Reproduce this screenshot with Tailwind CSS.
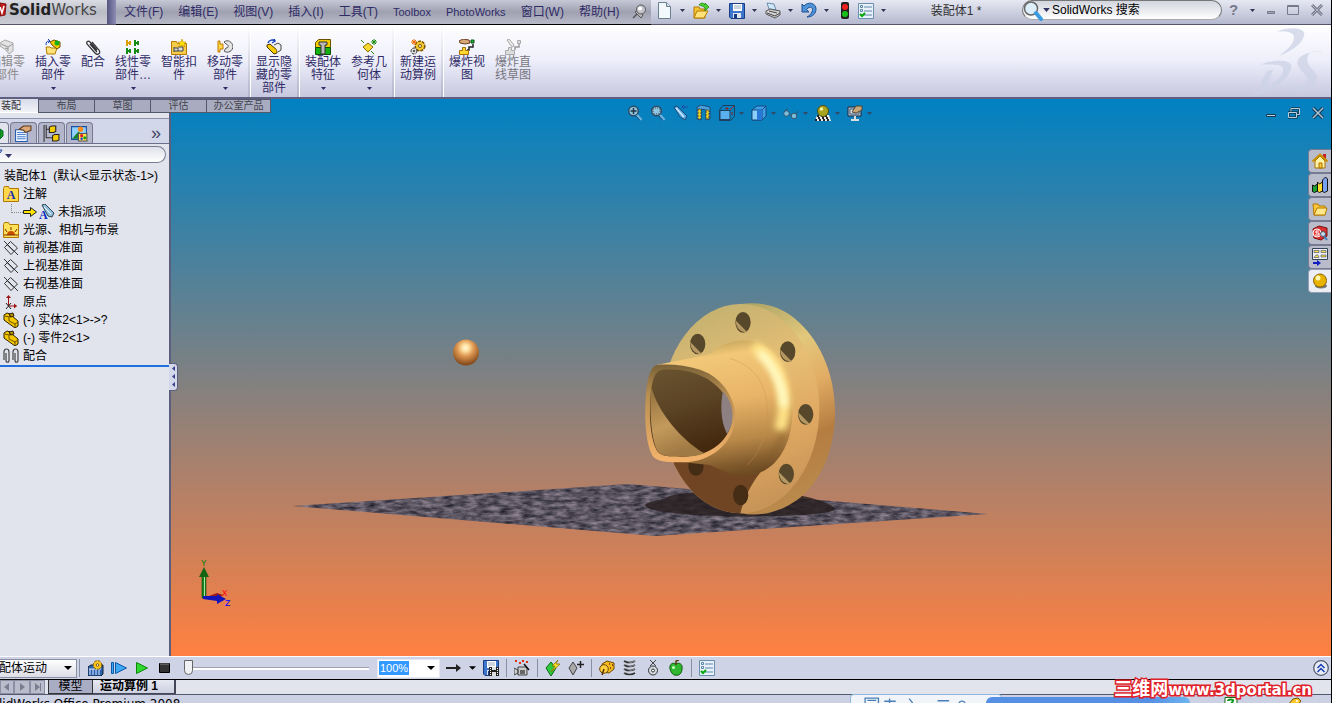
<!DOCTYPE html>
<html lang="zh-CN">
<head>
  <meta charset="UTF-8">
  <meta name="viewport" content="width=device-width, initial-scale=1.0">
  <title>SolidWorks - 装配体1</title>
  <script src="https://cdn.jsdelivr.net/npm/@tailwindcss/browser@4"></script>
</head>
<body class="h-screen flex flex-col overflow-hidden border-r border-black bg-[#cfd3e6] font-['Liberation_Sans','Noto_Sans_CJK_SC',sans-serif] text-[12px] leading-[18px] text-black">

  <!-- Shared symbols -->
  <svg class="hidden">
    <symbol id="down" viewBox="0 0 5 3"><path d="M0 0h5L2.500 3z" fill="currentColor"/></symbol>
    <symbol id="plane" viewBox="0 0 16 16"><path d="M1.500 7.500l6-6 7 6.500-6.500 6.500zM1 1l14 14M4 4.500l7 7" fill="none" stroke="#333"/></symbol>
    <symbol id="part" viewBox="0 0 16 16"><path d="M1 3l3-2 3 1v3l2-1 6 5v5l-3 2L1 8z" fill="#f5c800" stroke="#2b2000"/><path d="M2 4l4 1v4l6 3v3M6 5l2-1M12 12l3-2" fill="none" stroke="#6b5000"/><path d="M6 2l4-1 1 3-3 1z" fill="#b89000" stroke="#2b2000"/></symbol>
    <symbol id="floppy" viewBox="0 0 16 16"><path d="M.5.500h15v15H2l-1.500-1.500z" fill="#3d77cc" stroke="#173c82"/><path d="M4 1h9v7H4z" fill="#fff"/><path d="M5 3h7M5 5h7" stroke="#9ab"/><path d="M4 10h8v5H4z" fill="#dfe6f2"/><path d="M5 11h3v4H5z" fill="#173c82"/></symbol>
    <symbol id="list" viewBox="0 0 16 16"><path d="M.5.5h15v15H.500z" fill="#e8f0fa" stroke="#6b8fae"/><path d="M6 4h8M6 8h8M6 12h8" stroke="#5d87a8"/><path d="M2.500 2.500h2v2h-2zM2.500 6.500h2v2h-2z" fill="none" stroke="#5d87a8"/><path d="M2 11l2 2 3-3" fill="none" stroke="#0a0" stroke-width="2"/></symbol>
    <symbol id="mag" viewBox="0 0 16 16"><circle cx="6.500" cy="6" r="4.800" fill="#8fc4de" stroke="#2d4d66" stroke-width="1.500"/><path d="M10 10l4.500 5" stroke="#6fb4e0" stroke-width="2.500"/><path d="M9 11l4 4.500" stroke="#1c4a77"/></symbol>
  </svg>

  <!-- Title bar -->
  <header class="flex h-[25px] shrink-0 items-stretch border-b border-[#55566a] bg-gradient-to-b from-[#e6e8f2] to-[#b5b9cf]">
    <div class="flex w-[107px] shrink-0 items-center overflow-hidden bg-gradient-to-b from-[#dcdde4] via-[#b9bbc5] to-[#cccdd6] pb-1 text-[15px]">
      <svg class="mr-px h-4 w-[8px] shrink-0" viewBox="0 0 8 16"><path d="M0 1l6 1-1 11-5 1z" fill="#c41d1d" stroke="#7d1010"/><path d="M0 5l2 6 2-7" fill="none" stroke="#fff" stroke-width="1.500"/></svg>
      <h1 class="whitespace-nowrap font-['DejaVu_Sans']"><b class="text-[#222]">Solid</b><span class="text-[#444]">Works</span></h1>
    </div>
    <div class="w-[9px] shrink-0 bg-gradient-to-r from-[#55557f] to-[#8d8db5]"></div>
    <nav class="-mb-px flex w-[535px] shrink-0 items-center gap-[15px] whitespace-nowrap border-b border-black bg-gradient-to-b from-[#c6c8d6] via-[#9fa1b1] to-[#b9bac8] pb-px pl-2 text-[#2f2b66]">
      <a href="#">文件(F)</a>
      <a href="#">编辑(E)</a>
      <a href="#">视图(V)</a>
      <a href="#">插入(I)</a>
      <a href="#">工具(T)</a>
      <a href="#" class="text-[11px]">Toolbox</a>
      <a href="#" class="text-[11px]">PhotoWorks</a>
      <a href="#">窗口(W)</a>
      <a href="#">帮助(H)</a>
      <svg class="-ml-[3px] h-4 w-4" viewBox="0 0 16 16"><path d="M1 14l5-5" stroke="#555" stroke-width="1.500"/><path d="M3 8l6 6 2-3-5-5z" fill="#bbb" stroke="#555"/><circle cx="9" cy="5.500" r="4.500" fill="#c4c4cc" stroke="#555"/><circle cx="8" cy="4.500" r="2" fill="#fff"/></svg>
    </nav>
    <div class="flex shrink-0 items-center gap-2 pb-[3px] pl-[6px] text-[#333355]">
      <button class="flex w-[28px] items-center justify-between" aria-label="新建"><svg class="h-[17px] w-4" viewBox="0 0 16 17"><path d="M1.500.500h8l4 4v12h-12z" fill="#f3f8fc" stroke="#6b7f90"/><path d="M9.500.500v4h4" fill="#cfe0ec" stroke="#6b7f90"/></svg><svg class="h-[3px] w-[5px]"><use href="#down"/></svg></button>
      <button class="flex w-[28px] items-center justify-between" aria-label="打开"><svg class="h-[17px] w-4" viewBox="0 0 16 17"><path d="M1 5h5l1 2h5v9H1z" fill="#f4c430" stroke="#b57a00"/><path d="M1 16l3-7h11l-4 7z" fill="#ffe27a" stroke="#b57a00"/><path d="M6 3c2-3 5-2 6 0V1l4 4-4 4V6c-1-2-4-2-6-3z" fill="#4ccf2f" stroke="#14800c" stroke-width=".7"/></svg><svg class="h-[3px] w-[5px]"><use href="#down"/></svg></button>
      <button class="flex w-[28px] items-center justify-between" aria-label="保存"><svg class="h-4 w-4"><use href="#floppy"/></svg><svg class="h-[3px] w-[5px]"><use href="#down"/></svg></button>
      <button class="flex w-[28px] items-center justify-between" aria-label="打印"><svg class="h-[17px] w-4" viewBox="0 0 16 17"><path d="M2 1l7 1 2 6-7-1z" fill="#cde6f8" stroke="#6b8fae"/><path d="M1 9l4-2 10 2v4l-5 3-9-4z" fill="#d4d4d4" stroke="#555"/><path d="M2 11l8 3 5-3M4 9l8 2" fill="none" stroke="#444"/></svg><svg class="h-[3px] w-[5px]"><use href="#down"/></svg></button>
      <button class="flex w-[28px] items-center justify-between" aria-label="撤销"><svg class="h-[17px] w-4" viewBox="0 0 16 17"><path d="M1 2v8h7L5.500 7.500C9 3 13 6 11 10c-1 2-3 4-5 5 6 0 9-4 9-8 0-6-8-8-12-3z" fill="#4f94d8" stroke="#1c4f94"/></svg><svg class="h-[3px] w-[5px]"><use href="#down"/></svg></button>
      <button class="ml-[3px] w-[10px]" aria-label="重建模型"><svg class="h-[17px] w-[10px]" viewBox="0 0 10 17"><rect x="1" width="8" height="17" rx="2" fill="#222"/><circle cx="5" cy="5" r="3" fill="#f02020"/><circle cx="5" cy="12" r="3" fill="#18c018"/></svg></button>
      <button class="flex w-[28px] items-center justify-between" aria-label="选项"><svg class="h-4 w-4"><use href="#list"/></svg><svg class="h-[3px] w-[5px]"><use href="#down"/></svg></button>
    </div>
    <div class="flex flex-1 items-center justify-center pb-[2px] pl-1 text-[#333]">装配体1 *</div>
    <div class="flex w-[200px] shrink-0 items-start">
      <label class="flex h-5 w-full items-center rounded-full border border-[#777] border-b-[#aaa] bg-gradient-to-b from-[#d3d5df] to-white">
        <svg class="mt-px h-5 w-5 shrink-0" viewBox="0 0 20 20"><circle cx="8" cy="7.500" r="6.500" fill="#dceffb" stroke="#666" stroke-width="1.500"/><path d="M13 12l5 6" stroke="#3a9be0" stroke-width="4" stroke-linecap="round"/></svg>
        <svg class="h-1 w-[7px] shrink-0 text-[#333366]"><use href="#down"/></svg>
        <input type="text" value="SolidWorks 搜索" aria-label="SolidWorks 搜索" class="ml-[2px] w-full bg-transparent outline-none">
      </label>
    </div>
    <div class="flex w-[109px] shrink-0 items-center justify-between pb-1 pl-[7px] pr-2 text-[#77798c]">
      <button class="text-[15px] font-bold" aria-label="帮助">?</button>
      <svg class="h-[3px] w-[5px] text-[#333355]"><use href="#down"/></svg>
      <button aria-label="最小化"><svg class="h-3 w-2" viewBox="0 0 8 12"><path d="M.5 7.500h7v2h-7z" fill="#a5a7b5" stroke="#77798c"/></svg></button>
      <button aria-label="最大化"><svg class="h-3 w-3" viewBox="0 0 12 12"><path d="M.5 1.500h11v9H.500z" fill="none" stroke="#77798c"/><path d="M1 2.500h10" stroke="#77798c"/></svg></button>
      <button aria-label="关闭"><svg class="h-3 w-3" viewBox="0 0 12 12"><path d="M1 1l10 10M11 1L1 11" stroke="#77798c" stroke-width="3"/><path d="M1 1l10 10M11 1L1 11" stroke="#b5b7c4"/></svg></button>
    </div>
  </header>

  <!-- Command ribbon -->
  <section class="relative flex h-[74px] shrink-0 items-stretch border-b-2 border-[#5f6080] bg-gradient-to-b from-white via-[#edeefa] to-[#c7c7df] text-center leading-[13px] text-[#2f2b66]">
    <button class="-ml-4 flex w-[46px] shrink-0 flex-col items-center px-1 pt-[14px] text-[#8b8b8b]">
      <svg class="mb-px h-4 w-4 shrink-0" viewBox="0 0 16 16"><path d="M1 4l5-3 8 3v8l-4 3-3-4-6-4z" fill="#e3e3e3" stroke="#aaa"/><path d="M2 5l7 3v4M9 8l5-3M6 9l3 1" stroke="#999" fill="none"/></svg>
      编辑零部件
    </button>
    <button class="flex w-[46px] shrink-0 flex-col items-center px-1 pt-[14px]">
      <svg class="mb-px h-4 w-4 shrink-0" viewBox="0 0 16 16"><path d="M1 8h4l1 1h6l-2 6H2z" fill="#ffe27a" stroke="#b57a00"/><path d="M5 3l4-2 6 2v5l-3 2-5-4z" fill="#f5c800" stroke="#6b5000"/><circle cx="12" cy="4" r="2.500" fill="#18b018"/><path d="M1 6c0-3 1-4 3-4M3 0l2 2-2 2" fill="none" stroke="#1440c0"/></svg>
      插入零部件
      <svg class="mt-[5px] h-[3px] w-[5px]"><use href="#down"/></svg>
    </button>
    <button class="flex w-[34px] shrink-0 flex-col items-center pt-[14px]">
      <svg class="mb-px h-4 w-4 shrink-0" viewBox="0 0 16 16"><path d="M12 11L5 3c-2-2-4 0-3 2l8 9c3 3 6 0 4-3L7 3M5 5l7 8" fill="none" stroke="#333" stroke-width="1.200"/></svg>
      配合
    </button>
    <button class="flex w-[46px] shrink-0 flex-col items-center px-1 pt-[14px]">
      <svg class="mb-px h-4 w-4 shrink-0" viewBox="0 0 16 16"><path d="M2 1v6M2 4h4M5 2v4" stroke="#d8a000" stroke-width="2"/><path d="M10 1v6M10 4h4M13 2v4M2 9v6M2 12h4M5 10v4M10 9v6M10 12h4M13 10v4" stroke="#148c14" stroke-width="2"/></svg>
      线性零部件…
      <svg class="mt-[5px] h-[3px] w-[5px]"><use href="#down"/></svg>
    </button>
    <button class="flex w-[46px] shrink-0 flex-col items-center px-1 pt-[14px]">
      <svg class="mb-px h-4 w-4 shrink-0" viewBox="0 0 16 16"><path d="M.5 2.500h5l1 2h9v11H.500z" fill="#f5cc4a" stroke="#b57a00"/><path d="M3 8v5M3 9h4v3H3M7 8h5v4H7" fill="#ddd" stroke="#444"/><path d="M11 0l1 3h3l-2 2 1 3-3-2-3 2 1-3-2-2h3z" fill="#ffe600" stroke="#c89000" stroke-width=".6"/></svg>
      智能扣件
    </button>
    <button class="flex w-[46px] shrink-0 flex-col items-center px-1 pt-[14px]">
      <svg class="mb-px h-4 w-4 shrink-0" viewBox="0 0 16 16"><path d="M1 2v11h2v-3h3V5H3V2z" fill="#ffd84a" stroke="#c07800"/><path d="M7 3c4-3 8 0 9 4 0 5-5 8-9 5l2-3c3 0 3-3 0-4z" fill="#e4e4e4" stroke="#555"/></svg>
      移动零部件
      <svg class="mt-[5px] h-[3px] w-[5px]"><use href="#down"/></svg>
    </button>
    <div class="w-[3px] shrink-0 border-r border-white bg-gradient-to-b from-white to-[#b4b4cc]"></div>
    <button class="flex w-[46px] shrink-0 flex-col items-center px-1 pt-[14px]">
      <svg class="mb-px h-4 w-4 shrink-0" viewBox="0 0 16 16"><path d="M1 6l3-1 7 6v3l-3 1-7-7z" fill="#f5c800" stroke="#4a3500"/><path d="M8 6l4-2 3 2v5l-3 2" fill="#eee" stroke="#444"/><path d="M2 4c1-3 5-4 7-2M8 0l1 2-3 2" fill="none" stroke="#1440c0" stroke-width="1.500"/></svg>
      显示隐藏的零部件
    </button>
    <div class="w-[3px] shrink-0 border-r border-white bg-gradient-to-b from-white to-[#b4b4cc]"></div>
    <button class="flex w-[46px] shrink-0 flex-col items-center px-1 pt-[14px]">
      <svg class="mb-px h-4 w-4 shrink-0" viewBox="0 0 16 16"><path d="M.5 3.500l3-3h12v8H.500z" fill="#f5cc00" stroke="#6b5000"/><path d="M.5 8.500h15v7H.500z" fill="#14b014" stroke="#0a500a"/><path d="M4 3h8v3h-2v9H6V6H4z" fill="#bbb" stroke="#333"/></svg>
      装配体特征
      <svg class="mt-[5px] h-[3px] w-[5px]"><use href="#down"/></svg>
    </button>
    <button class="flex w-[46px] shrink-0 flex-col items-center px-1 pt-[14px]">
      <svg class="mb-px h-4 w-4 shrink-0" viewBox="0 0 16 16"><path d="M2 8l5-4 5 4-5 5z" fill="#f5d830" stroke="#8a6a00"/><path d="M0 1l3 3M10 12l3 3M13 0v6M10 3h6M11 1l4 4M15 1l-4 4" stroke="#148c14"/></svg>
      参考几何体
      <svg class="mt-[5px] h-[3px] w-[5px]"><use href="#down"/></svg>
    </button>
    <div class="w-[3px] shrink-0 border-r border-white bg-gradient-to-b from-white to-[#b4b4cc]"></div>
    <button class="flex w-[46px] shrink-0 flex-col items-center px-1 pt-[14px]">
      <svg class="mb-px h-4 w-4 shrink-0" viewBox="0 0 16 16"><circle cx="10" cy="7" r="4.800" fill="#f5c830" stroke="#7a5500" stroke-width="1.500" stroke-dasharray="3 1"/><circle cx="10" cy="7" r="1.500" fill="#fff" stroke="#7a5500"/><circle cx="4" cy="12" r="3" fill="#ddd" stroke="#333" stroke-dasharray="3 1"/><circle cx="4" cy="12" r="1" fill="#333"/><path d="M4 0v6M1 3h6M2 1l4 4M6 1L2 5" stroke="#f06a00"/></svg>
      新建运动算例
    </button>
    <div class="w-[3px] shrink-0 border-r border-white bg-gradient-to-b from-white to-[#b4b4cc]"></div>
    <button class="flex w-[46px] shrink-0 flex-col items-center px-1 pt-[14px]">
      <svg class="mb-px h-4 w-4 shrink-0" viewBox="0 0 16 16"><path d="M0 2l4-2 6 1 1 3-5 1-5-1z" fill="#d8a878" stroke="#6b4020"/><path d="M12 1h3v3h-3z" fill="#18c040" stroke="#0a500a"/><path d="M14 5v3h-4v3H8" fill="none" stroke="#222" stroke-width="1.500"/><path d="M3.500 8.500h3v3h3v4h-9v-4h3z" fill="#ffd830" stroke="#a87000"/></svg>
      爆炸视图
    </button>
    <button class="flex w-[46px] shrink-0 flex-col items-center px-1 pt-[14px] text-[#77777f]">
      <svg class="mb-px h-4 w-4 shrink-0" viewBox="0 0 16 16"><path d="M2 1l2-1 5 6-1 2-2-1z" fill="#e8e8e8" stroke="#aaa"/><path d="M12.500 1.500h3v3h-3zM3.500 8.500h3v3h3v4h-9v-4h3z" fill="#ddd" stroke="#aaa"/><path d="M14 5v3h-4v3" fill="none" stroke="#999" stroke-width="1.500"/></svg>
      爆炸直线草图
    </button>
    <svg class="ml-auto h-[72px] w-20 shrink-0" viewBox="810 75 240 219" fill="#cdd3e6" opacity=".75"><path d="M887 95c30-15 90-15 83 12-6 28-45 50-77 63 30-22 50-43 45-62-6-16-36-13-51-13zM838 195c40-16 98-18 93 10-7 34-56 74-113 86l38-75 20-6-22 55c30-14 53-38 52-56-2-18-44-12-68-14zM1028 159c-40-10-50 5-48 28 6 22 36 34 29 57-8 22-50 40-97 18 40 4 64-2 67-17 4-20-28-34-30-54 0-24 40-40 79-32z"/></svg>
  </section>

  <!-- Work area -->
  <main class="relative flex min-h-0 flex-1">

    <!-- Command tabs, lying over the graphics area -->
    <div class="absolute left-0 top-0 z-10 flex h-[14px] text-[10px] leading-[12px] text-[#44454f]">
      <button class="w-[38px] overflow-hidden border-b border-white bg-gradient-to-b from-[#d9dbe9] to-[#f2f3f8] pr-4 text-center text-[#333]">装配</button>
      <button class="w-[57px] border border-[#555868] bg-[#a9acc0]">布局</button>
      <button class="w-[56px] border border-l-0 border-[#555868] bg-[#a9acc0]">草图</button>
      <button class="w-[56px] border border-l-0 border-[#555868] bg-[#a9acc0]">评估</button>
      <button class="w-[64px] border border-l-0 border-[#555868] bg-[#a9acc0]">办公室产品</button>
    </div>

    <!-- Feature manager -->
    <aside class="relative flex w-[171px] shrink-0 flex-col border-r-2 border-[#5b5f7d] bg-[#e1e3ed] pt-[14px]">
      <div class="h-[6px] shrink-0 border-b border-[#8b8fa8] bg-[#e1e3ed]"></div>
      <div class="flex h-[25px] shrink-0 items-end border-b border-[#6b6f8c] bg-[#d3d7ea] pr-2">
        <button class="mr-px flex h-[21px] w-[9px] items-center rounded-tr border-r border-t border-[#777b92] bg-[#e1e3ed]" aria-label="设计树"><svg class="h-4 w-1" viewBox="0 0 4 16"><path d="M0 4l3 2v5l-3 3z" fill="#18a018" stroke="#063"/></svg></button>
        <button class="mr-px flex h-[21px] w-[27px] items-center justify-center rounded-t border border-b-0 border-[#777b92] bg-[#b4b7cc]" aria-label="属性"><svg class="h-[17px] w-[17px]" viewBox="0 0 16 16"><path d="M.5 4.500h11v11H.500z" fill="#eef4ff" stroke="#2a5fb0"/><path d="M2 7h8M2 9h8M2 11h8M2 13h8" stroke="#4a80d0"/><path d="M4 4l4-3h7v4l-5 2-2-2z" fill="#dca878" stroke="#5f3a18"/></svg></button>
        <button class="mr-px flex h-[21px] w-[27px] items-center justify-center rounded-t border border-b-0 border-[#777b92] bg-[#b4b7cc]" aria-label="配置"><svg class="h-[17px] w-[17px]" viewBox="0 0 16 16"><path d="M1 0v16M3 4h4M3 0v12h6" stroke="#333" fill="none"/><path d="M6 2l2-1h4v5l-2 1H6zM9 10l2-1h4v5l-2 1H9z" fill="#f5cc00" stroke="#222"/></svg></button>
        <button class="flex h-[21px] w-[27px] items-center justify-center rounded-t border border-b-0 border-[#777b92] bg-[#b4b7cc]" aria-label="渲染"><svg class="h-[17px] w-[17px]" viewBox="0 0 16 16"><path d="M.5 1.500h14v12H.500z" fill="#8fd0ff" stroke="#1a4fa0"/><path d="M1 13l6-7 7 7z" fill="#18802f"/><circle cx="9" cy="4" r="2.500" fill="#ff8c1a"/><path d="M7 8h8v7H7z" fill="#ffe24a" stroke="#555"/><circle cx="10" cy="10" r="1.500" fill="#e02020"/><circle cx="13" cy="12" r="1.500" fill="#18a018"/><circle cx="10" cy="13" r="1.200" fill="#2040e0"/></svg></button>
        <button class="ml-auto pb-[2px] text-[18px] leading-4 text-[#44485f]" aria-label="展开">»</button>
      </div>
      <label class="mt-[2px] flex h-[17px] w-[166px] shrink-0 items-center rounded-r-full border border-l-0 border-[#777b92] bg-gradient-to-b from-[#dfe1ea] to-white">
        <svg class="h-3 w-3 shrink-0" viewBox="0 0 12 12"><path d="M0 1h2L0 4" stroke="#1a3f9f" fill="none"/><path d="M5 5h7L8.500 9z" fill="#333366"/></svg>
        <input type="text" aria-label="过滤器" class="w-full bg-transparent outline-none">
      </label>
      <ul class="mt-1 shrink-0 overflow-hidden whitespace-nowrap border-b-2 border-[#1f6fe0]">
        <li class="h-[18px] pl-1">装配体1&nbsp; (默认&lt;显示状态-1&gt;)</li>
        <li class="flex h-[18px] items-center gap-1 pl-[3px]"><svg class="h-4 w-4" viewBox="0 0 16 16"><path d="M.5 2.500l1-2h4l1 2h9v13H.500z" fill="#ffd84a" stroke="#b07800"/><text x="8" y="13" text-anchor="middle" font-family="Liberation Serif" font-weight="bold" font-size="12" fill="#1a2fb0">A</text></svg>注解</li>
        <li class="flex h-[18px] items-center pl-[11px]"><span class="mb-2 h-[9px] w-[12px] border-b border-l border-dotted border-[#888]"></span><svg class="h-3 w-[14px]" viewBox="0 0 14 12"><path d="M.5 4.500h7v-3l6 4.500-6 4.500v-3h-7z" fill="#ffe600" stroke="#222"/></svg><svg class="ml-[2px] mr-[3px] h-4 w-4" viewBox="0 0 16 16"><path d="M3 1l3-1 9 9-2 4-4-1z" fill="#8fbfdf" stroke="#345"/><path d="M5 3l7 7" stroke="#fff"/><text x="0" y="15" font-family="Liberation Serif" font-weight="bold" font-size="12" fill="#0a2fc0">A</text></svg>未指派项</li>
        <li class="flex h-[18px] items-center gap-1 pl-[3px]"><svg class="h-4 w-4" viewBox="0 0 16 16"><path d="M.5 2.500l1-2h4l1 2h9v13H.500z" fill="#ffe25a" stroke="#b07800"/><path d="M4 13a4 4 0 0 1 8 0z" fill="#c85000"/><path d="M8 8V5M4 10L2 7M12 10l2-3M1 13h14" stroke="#7a2a00"/></svg>光源、相机与布景</li>
        <li class="flex h-[18px] items-center gap-1 pl-[3px]"><svg class="h-4 w-4"><use href="#plane"/></svg>前视基准面</li>
        <li class="flex h-[18px] items-center gap-1 pl-[3px]"><svg class="h-4 w-4"><use href="#plane"/></svg>上视基准面</li>
        <li class="flex h-[18px] items-center gap-1 pl-[3px]"><svg class="h-4 w-4"><use href="#plane"/></svg>右视基准面</li>
        <li class="flex h-[18px] items-center gap-1 pl-[3px]"><svg class="h-4 w-4" viewBox="0 0 16 16"><path d="M5.500 2v10h8" stroke="#a01010" fill="none"/><path d="M3 4l2.500-3L8 4zM11 9.500l3 2.500-3 2.500z" fill="#a01010"/><path d="M3 9l5 6M8 9l-5 6" stroke="#222"/></svg>原点</li>
        <li class="flex h-[18px] items-center gap-1 pl-[3px]"><svg class="h-4 w-4"><use href="#part"/></svg>(-) 实体2&lt;1&gt;-&gt;?</li>
        <li class="flex h-[18px] items-center gap-1 pl-[3px]"><svg class="h-4 w-4"><use href="#part"/></svg>(-) 零件2&lt;1&gt;</li>
        <li class="flex h-[18px] items-center gap-1 pl-[3px]"><svg class="h-4 w-4" viewBox="0 0 16 16"><path d="M1 12V4c0-4 5-4 5 0v8c0 3-3 3-3 0V5M10 12V4c0-4 5-4 5 0v8c0 3-3 3-3 0V5" fill="none" stroke="#444" stroke-width="1.200"/></svg>配合</li>
      </ul>
      <!-- Collapse handle on the panel's edge -->
      <button class="absolute -right-[9px] top-[264px] z-10 flex h-[28px] w-[9px] flex-col items-center justify-around rounded-r border border-l-0 border-[#5b5f7d] bg-[#d3d7ea]" aria-label="折叠">
        <svg class="h-[22px] w-1" viewBox="0 0 4 22" fill="#3f3f8f"><path d="M4 0v5L1 2.500zM4 8v5l-3-2.500zM4 16v5l-3-2.500z"/></svg>
      </button>
    </aside>

    <!-- Graphics area -->
    <section class="relative min-w-0 flex-1 bg-linear-to-b/srgb from-[#0081c2] to-[#ff8040]">
      <svg class="absolute inset-0 h-full w-full" viewBox="171 99 1160 557" preserveAspectRatio="xMidYMax slice">
        <defs>
          <filter id="stone" x="0" y="0" width="1" height="1" color-interpolation-filters="sRGB">
            <feTurbulence type="fractalNoise" baseFrequency=".09 .28" numOctaves="3" seed="4"/>
            <feColorMatrix values=".6 0 0 0 .06  .55 0 0 0 .06  .55 0 0 0 .11  0 0 0 0 1"/>
            <feComposite in2="SourceGraphic" operator="in"/>
          </filter>
          <filter id="soft" x="-1" y="-1" width="3" height="3" color-interpolation-filters="sRGB"><feGaussianBlur stdDeviation="9"/></filter>
          <radialGradient id="ball" cx=".48" cy=".32" r=".65"><stop offset="0" stop-color="#fff8d8"/><stop offset=".2" stop-color="#ffe0a0"/><stop offset=".5" stop-color="#dc9550"/><stop offset="1" stop-color="#844a1c"/></radialGradient>
          <linearGradient id="rim" x2=".2" y2="1"><stop offset="0" stop-color="#a9a264"/><stop offset=".28" stop-color="#e2c87c"/><stop offset=".5" stop-color="#e2ad65"/><stop offset=".75" stop-color="#b57c40"/><stop offset="1" stop-color="#b98a4c"/></linearGradient>
          <linearGradient id="face" x1=".2" x2=".5" y2="1"><stop offset="0" stop-color="#c0b070"/><stop offset=".4" stop-color="#e6be74"/><stop offset=".7" stop-color="#e0a862"/><stop offset="1" stop-color="#c89558"/></linearGradient>
          <linearGradient id="body" x1=".4" x2=".55" y2="1"><stop offset="0" stop-color="#c0a058"/><stop offset=".12" stop-color="#f2c878"/><stop offset=".45" stop-color="#e8b468"/><stop offset=".75" stop-color="#b88848"/><stop offset="1" stop-color="#6b4822"/></linearGradient>
          <linearGradient id="lip" x2="0" y2="1"><stop offset="0" stop-color="#7a6238"/><stop offset=".3" stop-color="#b88e50"/><stop offset="1" stop-color="#f5b46c"/></linearGradient>
          <linearGradient id="bore" x2=".3" y2="1"><stop offset="0" stop-color="#6a5430"/><stop offset=".5" stop-color="#5a4224"/><stop offset="1" stop-color="#44290f"/></linearGradient>
          <linearGradient id="lit" x2=".3" y2="1"><stop offset="0" stop-color="#8c6c3a"/><stop offset=".6" stop-color="#c49a5c"/><stop offset="1" stop-color="#a07a44"/></linearGradient>
          <clipPath id="faceclip"><ellipse cx="362" cy="356" rx="236" ry="314"/></clipPath>
        </defs>
        <path d="M293 506L628 484 988 514 655 536z" filter="url(#stone)"/>
        <path d="M645 505c5-5 20-5 22-8 20-8 100-8 130-2 20 3 42 12 37 15-10 8-130 8-160 3-20-2-28-5-29-8z" fill="#241c1c" opacity=".8"/>
        <circle cx="466" cy="352.500" r="13" fill="url(#ball)"/>
        <svg x="620" y="290" width="240" height="240" viewBox="0 0 720 720">
          <path d="M362 42C430 34 490 50 540 100c65 62 105 160 105 265 0 110-40 205-105 258-50 38-110 60-178 47z" fill="url(#rim)"/>
          <ellipse cx="362" cy="356" rx="236" ry="314" fill="url(#face)"/>
          <g clip-path="url(#faceclip)">
            <path d="M160 500l140 25 150-15c-50 60-75 100-90 165H160z" fill="#704523"/>
          </g>
          <g fill="#57482b">
            <ellipse cx="369" cy="97" rx="23" ry="31"/><ellipse cx="503" cy="185" rx="23" ry="31"/><ellipse cx="557" cy="373" rx="23" ry="31"/><ellipse cx="499" cy="552" rx="23" ry="31"/><ellipse cx="233" cy="162" rx="23" ry="31"/>
          </g>
          <g fill="#b59762">
            <path d="M346 90q4 38 36 37zM480 178q4 38 36 37zM534 366q4 38 36 37zM476 545q4 38 36 37zM210 155q4 38 36 37z"/>
          </g>
          <g fill="#452c14"><ellipse cx="362" cy="615" rx="23" ry="31"/><ellipse cx="228" cy="528" rx="23" ry="30"/></g>
          <!-- neck and fillet -->
          <path d="M110 225l160-33c30-30 80-48 130-38 80 20 118 110 118 206 0 110-56 195-138 195-40 0-80-15-110-30l-80-8z" fill="url(#body)"/>
          <path d="M400 170c62 30 95 95 92 180-2 30-6 50-14 70" fill="none" stroke="#ffe488" stroke-width="34" filter="url(#soft)"/>
          <path d="M425 195c36 35 62 90 66 145" fill="none" stroke="#fffbc8" stroke-width="24" stroke-linecap="round" filter="url(#soft)"/>
          <path d="M330 205c90 30 112 95 112 165 0 65-25 120-60 155" fill="none" stroke="#c8924a" stroke-width="3" opacity=".4"/>
          <path d="M300 535c60 20 110 10 150-35 22-25 36-50 44-75" fill="none" stroke="#7d5a2a" stroke-width="12" opacity=".55" filter="url(#soft)"/>
          <!-- opening -->
          <path d="M110 225c40-4 90 2 130 14 70 24 108 90 106 146-3 70-70 132-156 132-40 0-70-1-85-12-25-20-31-105-29-155 2-60 9-118 34-125z" fill="url(#lip)"/>
          <path d="M125 240c40-4 75 2 105 12 68 24 106 82 106 133-3 60-60 115-146 115-30 0-60 0-72-10-22-20-30-90-28-140 2-60 9-106 35-110z" fill="url(#bore)"/>
          <path d="M93 285c15 75 90 165 160 205-20 8-40 10-63 10-30 0-60 0-72-10-24-22-30-130-25-205z" fill="url(#lit)"/>
          <path d="M309 303c34 40 38 90 12 129-20-40-20-90-12-129z" fill="#8c8083"/>
        </svg>
        <!-- axis triad -->
        <g>
          <path d="M202 574h4v24h-4z" fill="#18801c" stroke="#0a4a0c" stroke-width=".6"/><path d="M204.500 575v22" stroke="#a8e8a8"/><path d="M204 567l5 10h-10z" fill="#146414"/>
          <path d="M209 596l8-3 6 2-6 4z" fill="#a01818"/>
          <path d="M203 596h14v-2l9 5-9 5v-3l-14-2z" fill="#1414b8"/>
          <g font-family="Liberation Mono" font-size="9"><text x="201" y="566" fill="#008000">Y</text><text x="222" y="596" fill="#f00">X</text><text x="225" y="606" fill="#00f">Z</text></g>
        </g>
      </svg>

      <!-- View toolbar -->
      <div class="relative flex h-[28px] items-center justify-center gap-[7px] pr-1 text-[#2d4a66]">
        <button aria-label="整屏显示全图"><svg class="h-4 w-4" viewBox="0 0 16 16"><use href="#mag"/><path d="M6.500 3v6M3.500 6h6" stroke="#234" stroke-width="1.500"/></svg></button>
        <button aria-label="局部放大"><svg class="h-4 w-4" viewBox="0 0 16 16"><use href="#mag"/><path d="M3 3h7v6H3z" fill="none" stroke="#456" stroke-dasharray="1"/></svg></button>
        <button aria-label="上一视图"><svg class="h-4 w-4" viewBox="0 0 16 16"><path d="M1 2l3-1 10 10-2 4-5-3z" fill="#58a4e0" stroke="#1c4a77"/><path d="M3 3l8 9" stroke="#d0ecff" stroke-width="1.500"/><path d="M9 2h6M11 0L9 2l2 2" stroke="#1f4a9f" fill="none"/></svg></button>
        <button aria-label="剖面视图"><svg class="h-4 w-4" viewBox="0 0 16 16"><path d="M1 2l4-2 9 2v12l-4 1V5L5 4v11l-4-1z" fill="#4aa0dc" stroke="#1c4a77"/><path d="M2 4h3v10H2zM10 5h3v9h-3z" fill="#e8d020" stroke="#444" stroke-dasharray="2 1"/></svg></button>
        <button class="flex items-center gap-1" aria-label="视图定向"><svg class="h-4 w-4" viewBox="0 0 16 16"><path d="M4 .500h11.500v11l-4 4H.500V5z" fill="none" stroke="#1d4060"/><path d="M1 5.500h10v9H1z" fill="#5ab0ec" stroke="#1d4060"/><path d="M11 5l4-4M8 2v3M6.500 3.500h3M13 7v3" stroke="#a02020"/></svg><svg class="h-[3px] w-[5px]"><use href="#down"/></svg></button>
        <button class="flex items-center gap-1" aria-label="显示样式"><svg class="h-4 w-4" viewBox="0 0 16 16"><path d="M1 5l5-4h9v10l-4 4H1z" fill="#3f9fe8" stroke="#174a80"/><path d="M1 5h10v10H1z" fill="#8cd0f8" stroke="#174a80"/><path d="M6 5h5v10H6z" fill="#2878d8"/><path d="M11 5l4-4" stroke="#174a80"/></svg><svg class="h-[3px] w-[5px]"><use href="#down"/></svg></button>
        <button class="flex items-center gap-1" aria-label="隐藏/显示项目"><svg class="h-4 w-4" viewBox="0 0 16 16"><circle cx="3.500" cy="8.500" r="2.800" fill="#7cbcd8" stroke="#33566e"/><circle cx="11" cy="11" r="2.800" fill="#7cbcd8" stroke="#33566e"/><path d="M6 9l2 1M1 7l4-4M13 9l2-3" stroke="#33566e" fill="none"/></svg><svg class="h-[3px] w-[5px]"><use href="#down"/></svg></button>
        <button class="flex items-center gap-1" aria-label="应用布景"><svg class="h-4 w-4" viewBox="0 0 16 16"><path d="M2 10h12l2 6H0z" fill="#eee"/><path d="M2 11h12M3 13h12M0 15h16" stroke="#222" stroke-width="2" stroke-dasharray="2 2"/><circle cx="8" cy="6" r="5.500" fill="#a8a420" stroke="#4f4f10"/><circle cx="6.500" cy="4" r="1.800" fill="#f4f09a"/></svg><svg class="h-[3px] w-[5px]"><use href="#down"/></svg></button>
        <button class="flex items-center gap-1" aria-label="视图设定"><svg class="h-4 w-4" viewBox="0 0 16 16"><path d="M1 2h13v9H1z" fill="#a8c8dc" stroke="#223"/><path d="M3 4h9v5H3z" fill="#dfeef6" stroke="#456"/><path d="M4 15h8M8 11v3" stroke="#ddd" stroke-width="2"/><path d="M5 7l4-6h6v4l-6 3z" fill="#c8a878" stroke="#543"/></svg><svg class="h-[3px] w-[5px]"><use href="#down"/></svg></button>
      </div>

      <!-- Document window buttons -->
      <div class="absolute right-[7px] top-2 flex items-center gap-3">
        <button aria-label="最小化"><svg class="h-3 w-[10px]" viewBox="0 0 10 12"><path d="M.5 7.500h9v2h-9z" fill="#b8d0e0" stroke="#16384f"/></svg></button>
        <button aria-label="还原"><svg class="h-3 w-3" viewBox="0 0 12 12"><path d="M3 1.500h8.500v6H9M3 1.500v3M.5 5.500h8v5h-8z" fill="none" stroke="#16384f" stroke-width="2.500"/><path d="M3 1.500h8.500v6H9M3 1.500v3M.5 5.500h8v5h-8z" fill="none" stroke="#b8d0e0"/></svg></button>
        <button aria-label="关闭"><svg class="h-3 w-3" viewBox="0 0 12 12"><path d="M1 1l10 10M11 1L1 11" stroke="#16384f" stroke-width="3.500"/><path d="M1 1l10 10M11 1L1 11" stroke="#a8c4d8" stroke-width="1.500"/></svg></button>
      </div>

      <!-- Task pane -->
      <div class="absolute right-0 top-[50px] flex w-[23px] flex-col">
        <button class="flex h-6 items-center justify-center rounded-l border border-r-0 border-[#777b92] bg-[#b9bccb]" aria-label="SolidWorks 资源"><svg class="h-4 w-4" viewBox="0 0 16 16"><path d="M11 1h3v6h-3z" fill="#c82020"/><path d="M3 8v7h10V8L8 3z" fill="#fff3a8" stroke="#a87000"/><path d="M.5 8.500L8 1.500l7.500 7" fill="none" stroke="#c89000" stroke-width="2"/><path d="M7 10h3v5H7z" fill="#ffc83a" stroke="#a87000"/></svg></button>
        <button class="flex h-6 items-center justify-center rounded-l border border-r-0 border-[#777b92] bg-[#b9bccb]" aria-label="设计库"><svg class="h-4 w-4" viewBox="0 0 16 16"><path d="M.5 8l2 1 3-2v7l-3 1.500-2-1z" fill="#18a030" stroke="#111"/><path d="M5.500 5l2 2 3-2v9l-3 1.500-2-1z" fill="#ffd830" stroke="#111"/><path d="M10.500 3l3-3 2 2v12l-3 1.500-2-1z" fill="#7aa2f4" stroke="#111"/></svg></button>
        <button class="flex h-6 items-center justify-center rounded-l border border-r-0 border-[#777b92] bg-[#b9bccb]" aria-label="文件探索器"><svg class="h-4 w-4" viewBox="0 0 16 16"><path d="M1 3h5l1 2h6v9H2z" fill="#ffc83a" stroke="#b57a00"/><path d="M2 14l3-7h10l-2 7z" fill="#ffe88a" stroke="#b57a00"/></svg></button>
        <button class="flex h-6 items-center justify-center rounded-l border border-r-0 border-[#777b92] bg-[#b9bccb]" aria-label="搜索"><svg class="h-4 w-4" viewBox="0 0 16 16"><path d="M1 4l6-3 8 2v8l-6 4-7-2z" fill="#d83030" stroke="#7a1010"/><circle cx="5" cy="8" r="4" fill="#e83838" stroke="#fff"/><path d="M7 6H4v2h3v2H3" fill="none" stroke="#fff"/><circle cx="11" cy="9" r="2.500" fill="#cde" stroke="#456"/><path d="M12 11l3 4" stroke="#3a80c0" stroke-width="2"/></svg></button>
        <button class="flex h-6 items-center justify-center rounded-l border border-r-0 border-[#777b92] bg-[#b9bccb]" aria-label="视图调色板"><svg class="h-[18px] w-4" viewBox="0 0 16 18"><path d="M.5.500h15v11H.500z" fill="#eef" stroke="#345"/><path d="M2 2.500h5v2H2zM9 2.500h5v2H9zM9 7h5v2H9zM2 9.500h5L6 7H4z" fill="#ffe24a" stroke="#345" stroke-width=".6"/><path d="M1 14h4v-2l4 3-4 3v-2H1z" fill="#1020c0"/></svg></button>
        <button class="flex h-6 items-center justify-center rounded-l border border-r-0 border-[#999db2] bg-[#eceef5]" aria-label="外观"><svg class="h-4 w-4" viewBox="0 0 16 16"><ellipse cx="9" cy="13" rx="6" ry="2.500" fill="#777"/><circle cx="8" cy="7.500" r="6.500" fill="#e8b400" stroke="#8a6400"/><circle cx="6" cy="5" r="2.500" fill="#fff6b0"/></svg></button>
      </div>
    </section>
  </main>

  <!-- Motion study toolbar -->
  <section class="flex h-6 shrink-0 items-center border-b border-t border-b-black border-t-white bg-[#cfd3e6]">
    <label class="relative -ml-4 flex h-[19px] w-[93px] shrink-0 items-center border border-[#8b8fa3] bg-gradient-to-b from-white to-[#dcdde6]">
      <select aria-label="算例类型" class="h-full w-full appearance-none bg-transparent pl-[2px] leading-[17px] outline-none"><option>装配体运动</option></select>
      <svg class="pointer-events-none absolute right-1 h-1 w-2" viewBox="0 0 8 4"><path d="M0 0h8L4 4z"/></svg>
    </label>
    <span class="ml-[2px] h-[18px] w-px shrink-0 bg-[#8b8fa3]"></span>
    <div class="ml-2 flex shrink-0 items-center gap-[7px]">
      <button aria-label="计算"><svg class="h-4 w-4" viewBox="0 0 16 16"><path d="M0 7l3-2h12v9l-2 2H0z" fill="#2a60b0" stroke="#123"/><path d="M1 9h12M2 9v6M5 9v6M8 9v6M11 9v6" stroke="#dfe9ff"/><circle cx="9.500" cy="5" r="4.300" fill="#ffc820" stroke="#7a5500" stroke-dasharray="3 1"/><circle cx="9.500" cy="5" r="1.300" fill="#fff" stroke="#7a5500"/></svg></button>
      <button aria-label="从头播放"><svg class="h-4 w-4" viewBox="0 0 16 16"><path d="M.5 2.500h2v11h-2zM4.500 2.500l11 5.500-11 5.500z" fill="#3fa8f4" stroke="#0a58a8"/></svg></button>
      <button aria-label="播放"><svg class="h-4 w-4" viewBox="0 0 16 16"><path d="M2.500 2.500l11 5.500-11 5.500z" fill="#2fd82f" stroke="#0a880a"/></svg></button>
      <button aria-label="停止"><svg class="h-4 w-4" viewBox="0 0 16 16"><path d="M2.500 3.500h10v9h-10z" fill="#333" stroke="#000"/><path d="M3 4h9" stroke="#888"/></svg></button>
    </div>
    <input type="range" min="0" max="100" value="0" aria-label="时间" class="ml-[11px] h-[18px] w-[185px] shrink-0 appearance-none bg-transparent [&::-webkit-slider-runnable-track]:h-[3px] [&::-webkit-slider-runnable-track]:border-t [&::-webkit-slider-runnable-track]:border-[#9da0ae] [&::-webkit-slider-runnable-track]:bg-white [&::-webkit-slider-thumb]:-mt-[8px] [&::-webkit-slider-thumb]:h-[15px] [&::-webkit-slider-thumb]:w-[9px] [&::-webkit-slider-thumb]:appearance-none [&::-webkit-slider-thumb]:rounded-b-full [&::-webkit-slider-thumb]:rounded-t-sm [&::-webkit-slider-thumb]:border [&::-webkit-slider-thumb]:border-[#666] [&::-webkit-slider-thumb]:bg-[#f0f1f3]">
    <div class="ml-2 flex h-[19px] w-[63px] shrink-0 items-center justify-between border border-[#e6e8f2] bg-white pl-px pr-1">
      <input type="text" value="100%" aria-label="播放速度" class="h-[14px] w-[30px] bg-[#3399ff] pl-px text-[11px] text-white outline-none">
      <svg class="h-1 w-2" viewBox="0 0 8 4"><path d="M0 0h8L4 4z"/></svg>
    </div>
    <div class="ml-[6px] flex shrink-0 items-center gap-[7px]">
      <button class="flex items-center gap-[7px]" aria-label="播放模式"><svg class="h-4 w-4" viewBox="0 0 16 16"><path d="M0 7h10V4l5 4-5 4V9H0z" fill="#222"/></svg><svg class="h-1 w-[7px]" viewBox="0 0 8 4"><path d="M0 0h8L4 4z"/></svg></button>
      <button aria-label="保存动画"><svg class="h-4 w-4" viewBox="0 0 16 16"><use href="#floppy"/><path d="M6 7h10v9H6z" fill="#222"/><path d="M9 7h4v3H9zM9 12h4v4H9z" fill="#ddd"/><path d="M7.500 8v8M14.500 8v8" stroke="#fff" stroke-dasharray="1 1"/></svg></button>
      <span class="h-[18px] w-px bg-[#8b8fa3]"></span>
      <button aria-label="动画向导"><svg class="h-4 w-4" viewBox="0 0 16 16"><path d="M4 7h9v8H4zM0 8l4 2v3l-4 2z" fill="#ccc" stroke="#444"/><path d="M6 10h5v4H6z" fill="#666"/><path d="M10 4l5 6" stroke="#111" stroke-width="1.500"/><path d="M1 1h2M5 3h2M8 1h2M12 2h2" stroke="#e03010" stroke-width="2"/></svg></button>
      <span class="h-[18px] w-px bg-[#8b8fa3]"></span>
      <button aria-label="自动键码"><svg class="h-4 w-4" viewBox="0 0 16 16"><path d="M6 2l5 6-5 8-5-8z" fill="#2fc83f" stroke="#0a6a14"/><path d="M13 0L7 6h3l-4 6 9-8h-4z" fill="#ffe62a" stroke="#8a7000" stroke-width=".8"/></svg></button>
      <button aria-label="添加键码"><svg class="h-4 w-4" viewBox="0 0 16 16"><path d="M5 2l4 6-4 7-4-7z" fill="#aaa" stroke="#444"/><path d="M12.500 1v7M9 4.500h7" stroke="#222" stroke-width="1.500"/></svg></button>
      <span class="h-[18px] w-px bg-[#8b8fa3]"></span>
      <button aria-label="马达"><svg class="h-4 w-4" viewBox="0 0 16 16"><path d="M3 4l5-3 7 2v6l-5 4-6-1z" fill="#f5b820" stroke="#6b4800"/><circle cx="5" cy="9" r="4.300" fill="#ffd040" stroke="#6b4800"/><path d="M5 9l-2 6" stroke="#5a3000" stroke-width="1.500"/><path d="M10 4h1M13 5h1M11 8h1" stroke="#5a3000" stroke-width="1.500"/></svg></button>
      <button aria-label="弹簧"><svg class="h-4 w-4" viewBox="0 0 16 16"><path d="M2 1c3 2 8 2 11 0M2 5c3 2 8 2 11 0M2 9c3 2 8 2 11 0M2 13c3 2 8 2 11 0" fill="none" stroke="#333" stroke-width="1.700"/><path d="M13 1L2 5M13 5L2 9M13 9L2 13" stroke="#999" stroke-width=".8"/></svg></button>
      <button aria-label="接触"><svg class="h-4 w-4" viewBox="0 0 16 16"><path d="M5 0l6 6M11 0L5 6" stroke="#444"/><circle cx="8" cy="10.500" r="4.500" fill="#d4dae2" stroke="#333"/><circle cx="8" cy="10.500" r="1.500" fill="#fff" stroke="#333"/></svg></button>
      <button aria-label="引力"><svg class="h-4 w-4" viewBox="0 0 16 16"><path d="M8 4c-3-2-7 0-6 5 1 4 4 7 6 6 3 1 6-2 6-6 1-5-3-7-6-5z" fill="#2fb82f" stroke="#0a5a0a"/><path d="M8 5V1l3-1" stroke="#5a3a10" fill="none" stroke-width="1.500"/><circle cx="5.500" cy="7.500" r="1.500" fill="#c8ffc0"/></svg></button>
      <span class="h-[18px] w-px bg-[#8b8fa3]"></span>
      <button aria-label="算例属性"><svg class="h-4 w-4"><use href="#list"/></svg></button>
    </div>
    <button class="ml-auto mr-[2px]" aria-label="展开"><svg class="h-4 w-4" viewBox="0 0 16 16"><circle cx="8" cy="8" r="7.300" fill="#e8ecf6" stroke="#555b70" stroke-width="1.300"/><path d="M4.500 8L8 4.500 11.500 8M4.500 12L8 8.500l3.500 3.500" fill="none" stroke="#1a3fb0" stroke-width="1.500"/></svg></button>
  </section>

  <!-- Model / motion tabs -->
  <nav class="flex h-[15px] shrink-0 items-stretch border-b border-[#55586a] bg-[#e1e3ed] leading-[13px]">
    <div class="mr-[3px] flex text-[#7b7e92]">
      <button class="flex w-[14px] items-center justify-center border border-[#8b8fa3] bg-[#b9bccb]" aria-label="上一个"><svg class="h-2 w-2" viewBox="0 0 8 8"><path d="M6 0v8L1 4z" fill="currentColor"/></svg></button>
      <button class="flex w-[16px] items-center justify-center border border-[#8b8fa3] bg-[#b9bccb]" aria-label="下一个"><svg class="h-2 w-2" viewBox="0 0 8 8"><path d="M2 0v8l5-4z" fill="currentColor"/></svg></button>
      <button class="flex w-[15px] items-center justify-center border border-[#8b8fa3] bg-[#b9bccb]" aria-label="最后"><svg class="h-2 w-2" viewBox="0 0 8 8"><path d="M1 0v8l5-4zM6 0h1v8H6z" fill="currentColor"/></svg></button>
    </div>
    <a href="#" class="w-[45px] border border-t-0 border-[#333] bg-[#a9adc4] text-center">模型</a>
    <a href="#" class="w-[83px] border-b border-r-2 border-[#44475a] bg-gradient-to-b from-[#e6e8f2] to-[#cdd0e0] pl-[7px] font-bold">运动算例 1</a>
  </nav>

  <!-- Status bar -->
  <footer class="relative h-2 shrink-0 overflow-hidden bg-[#cdd1e4]">
    <p class="-ml-4 whitespace-nowrap font-['DejaVu_Sans'] text-[12px] leading-[18px]">SolidWorks Office Premium 2008</p>
    <svg class="absolute right-[27px] top-[2px] h-4 w-[80px]" viewBox="0 0 80 16"><path d="M1 .500h12v12H1z" fill="#fff" stroke="#157015"/><path d="M4 4c0-2 6-2 5 0l-2 3" fill="none" stroke="#0a9a1a" stroke-width="2"/><path d="M64 8l5-6 5-1 3 3-6 7z" fill="#ffc82a" stroke="#7a5500"/><circle cx="73" cy="4" r="1" fill="#fff"/></svg>
  </footer>

  <!-- Input method bar -->
  <div class="absolute bottom-0 left-[850px] flex h-[9px] w-[340px] items-end overflow-hidden">
    <svg class="h-[9px] w-[152px] shrink-0 rounded-t border border-b-0 border-[#8fb8dc] bg-[#f1f5fa]" viewBox="0 0 152 9"><path d="M7.500 9V3.500h15V9M10 6h10M29 7h13M35 4v5M57 4l4 5M89 6.500h13M113 9a4 4 0 0 1 7 0" fill="none" stroke="#4a80b8" stroke-width="1.500"/></svg>
    <div class="-ml-4 h-[6px] w-[204px] shrink-0 rounded-t-lg bg-gradient-to-r from-[#5590e4] from-80% to-[#6fb4ee]"></div>
  </div>

  <!-- Watermark -->
  <p class="absolute bottom-[3px] right-5 whitespace-nowrap font-['DejaVu_Sans','Noto_Sans_CJK_SC',sans-serif] text-[15px] font-bold leading-5 text-white [-webkit-text-stroke:3px_#e02028] [paint-order:stroke_fill]"><span class="text-[18px]">三维网</span>www.3dportal.cn</p>
</body>
</html>
